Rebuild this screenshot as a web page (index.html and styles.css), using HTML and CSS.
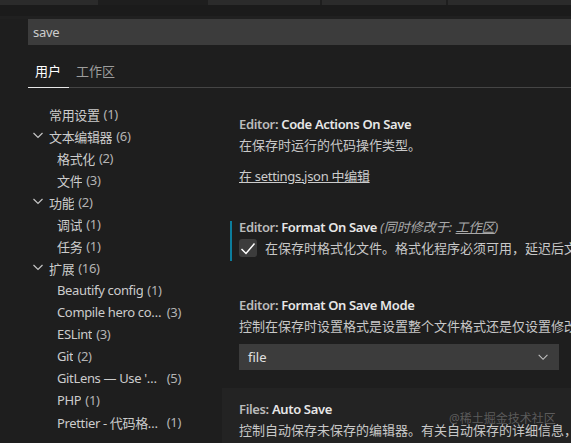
FILE: index.html
```html
<!DOCTYPE html>
<html lang="zh-CN">
<head>
<meta charset="utf-8">
<title>设置</title>
<link rel="stylesheet" href="styles.css">
</head>
<body>
<div class="topbar">
  <span class="seg seg-a"></span>
  <span class="seg seg-gap"></span>
  <span class="seg seg-b"></span>
  <span class="seg seg-c"></span>
  <span class="seg seg-d"></span>
</div>
<div class="shade"></div>
<div class="search">save</div>
<div class="tabs">
  <span class="tab active">用户</span>
  <span class="tab">工作区</span>
</div>
<div class="layout">
  <nav class="toc">
    <div class="row l1"><span class="label">常用设置</span><span class="count">(1)</span></div>
    <div class="row l1"><svg class="chev" viewBox="0 0 16 16"><polyline points="0.5,5 5,9.5 9.5,5"/></svg><span class="label">文本编辑器</span><span class="count">(6)</span></div>
    <div class="row l2"><span class="label">格式化</span><span class="count">(2)</span></div>
    <div class="row l2"><span class="label">文件</span><span class="count">(3)</span></div>
    <div class="row l1"><svg class="chev" viewBox="0 0 16 16"><polyline points="0.5,5 5,9.5 9.5,5"/></svg><span class="label">功能</span><span class="count">(2)</span></div>
    <div class="row l2"><span class="label">调试</span><span class="count">(1)</span></div>
    <div class="row l2"><span class="label">任务</span><span class="count">(1)</span></div>
    <div class="row l1"><svg class="chev" viewBox="0 0 16 16"><polyline points="0.5,5 5,9.5 9.5,5"/></svg><span class="label">扩展</span><span class="count">(16)</span></div>
    <div class="row l2"><span class="label">Beautify config</span><span class="count">(1)</span></div>
    <div class="row l2"><span class="label">Compile hero configuration</span><span class="count">(3)</span></div>
    <div class="row l2"><span class="label">ESLint</span><span class="count">(3)</span></div>
    <div class="row l2"><span class="label">Git</span><span class="count">(2)</span></div>
    <div class="row l2"><span class="label">GitLens — Use 'GitLens' in the Command Palette</span><span class="count">(5)</span></div>
    <div class="row l2"><span class="label">PHP</span><span class="count">(1)</span></div>
    <div class="row l2"><span class="label">Prettier - 代码格式化程序</span><span class="count">(1)</span></div>
  </nav>
  <main class="settings">
    <section class="setting s1">
      <div class="title"><span class="cat">Editor: </span><span class="name">Code Actions On Save</span></div>
      <div class="desc">在保存时运行的代码操作类型。</div>
      <div class="link">在 settings.json 中编辑</div>
    </section>
    <section class="setting s2 modified">
      <div class="title"><span class="cat">Editor: </span><span class="name">Format On Save</span><span class="also">(同时修改于: <u>工作区</u>)</span></div>
      <div class="check-row">
        <span class="checkbox"><svg viewBox="0 0 18 18"><polyline points="2.5,10 7,14.5 15.5,4.5"/></svg></span>
        <span class="check-text">在保存时格式化文件。格式化程序必须可用，延迟后文件不能自动保存，并且编辑器不能关闭。</span>
      </div>
    </section>
    <section class="setting s3">
      <div class="title"><span class="cat">Editor: </span><span class="name">Format On Save Mode</span></div>
      <div class="desc">控制在保存时设置格式是设置整个文件格式还是仅设置修改。仅当 "Editor: Format On Save" 处于启用状态时应用。</div>
      <div class="select"><span>file</span><svg class="select-chev" viewBox="0 0 12 8"><polyline points="0.5,1 5.5,6 10.5,1"/></svg></div>
    </section>
    <section class="setting s4">
      <div class="title"><span class="cat">Files: </span><span class="name">Auto Save</span></div>
      <div class="desc">控制自动保存未保存的编辑器。有关自动保存的详细信息，请参阅此处。</div>
      <span class="watermark">@稀土掘金技术社区</span>
    </section>
  </main>
</div>
</body>
</html>
```
FILE: styles.css
```css
html, body {
  margin: 0;
  padding: 0;
}
body {
  width: 571px;
  height: 443px;
  overflow: hidden;
  background: #1e1e1e;
  color: #cccccc;
  font-family: "Noto Sans", "Noto Sans CJK SC", sans-serif;
  font-size: 13px;
}
.topbar {
  display: flex;
  height: 5px;
}
.seg { display: block; height: 5px; }
.seg-a { width: 98px; background: #2b2b2b; }
.seg-gap { width: 110px; background: #1e1e1e; }
.seg-b { width: 112px; background: #2b2b2b; margin-right: 2px; }
.seg-c { width: 124px; background: #2b2b2b; margin-right: 2px; }
.seg-d { flex: 1; background: #2b2b2b; }
.shade {
  height: 11px;
  background: #1b1b1b;
  border-bottom: 3px solid #202020;
}
.search {
  margin-left: 28px;
  height: 26px;
  line-height: 26px;
  padding-left: 5px;
  background: #3c3c3c;
  color: #cccccc;
  letter-spacing: -0.3px;
}
.tabs {
  margin-left: 28px;
  height: 42px;
  display: flex;
  align-items: flex-end;
  border-bottom: 1px solid #454545;
}
.tab {
  line-height: 18px;
  padding: 0 8px 7px 7px;
  color: #9d9d9d;
}
.tab.active {
  color: #ffffff;
  border-bottom: 1px solid #e7e7e7;
  margin-bottom: -1px;
}
.layout {
  display: grid;
  grid-template-columns: 194px 1fr;
  padding-left: 28px;
}
.toc {
  padding-top: 15px;
}
.row {
  display: flex;
  align-items: center;
  height: 22px;
  white-space: nowrap;
  letter-spacing: -0.35px;
}
.row.l1 { padding-left: 21px; width: 132px; }
.row.l2 { padding-left: 29px; width: 124px; }
.chev {
  width: 16px;
  height: 16px;
  margin-left: -16px;
  flex-shrink: 0;
  fill: none;
  stroke: #c5c5c5;
  stroke-width: 1.2;
}
.label {
  overflow: hidden;
  text-overflow: ellipsis;
  min-width: 0;
  color: #cccccc;
}
.count {
  flex-shrink: 0;
  margin-left: 4px;
  color: #b4b4b4;
}
.settings {
  padding-top: 15px;
  min-width: 0;
}
.setting {
  position: relative;
  padding: 12px 0 18px 17px;
  white-space: nowrap;
}
.title {
  line-height: 18px;
  font-weight: 600;
}
.cat { color: #bbbbbb; letter-spacing: -0.35px; }
.name { color: #e7e7e7; letter-spacing: -0.35px; }
.also {
  font-weight: 400;
  font-style: italic;
  color: #a9a9a9;
  margin-left: 3px;
}
.desc {
  margin-top: 3px;
  line-height: 18px;
  color: #c8c8c8;
}
.link {
  margin-top: 13px;
  line-height: 18px;
  color: #cccccc;
  text-decoration: underline;
  letter-spacing: -0.3px;
}
.s1 { padding-bottom: 21px; }
.s2 { padding-bottom: 27px; }
.modified::before {
  content: "";
  position: absolute;
  left: 8px;
  top: 15px;
  width: 2px;
  height: 40px;
  background: #0c7d9d;
}
.check-row {
  display: flex;
  align-items: center;
  margin-top: 3px;
  height: 18px;
}
.checkbox {
  width: 18px;
  height: 18px;
  flex-shrink: 0;
  border-radius: 3px;
  background: #3c3c3c;
  margin-right: 8px;
}
.checkbox svg {
  display: block;
  width: 18px;
  height: 18px;
  fill: none;
  stroke: #ffffff;
  stroke-width: 1.5;
}
.check-text {
  line-height: 18px;
  color: #c8c8c8;
}
.select {
  margin-top: 9px;
  width: 320px;
  height: 26px;
  box-sizing: border-box;
  padding: 0 10px 0 9px;
  background: #3c3c3c;
  display: flex;
  align-items: center;
  justify-content: space-between;
  color: #e0e0e0;
}
.select-chev {
  width: 11px;
  height: 7px;
  fill: none;
  stroke: #c5c5c5;
  stroke-width: 1.2;
}
.s4 {
  background: #232323;
  height: 60px;
}
.watermark {
  position: absolute;
  left: 227px;
  top: 23px;
  font-size: 12px;
  line-height: 16px;
  color: rgba(200, 200, 200, 0.35);
}
```
